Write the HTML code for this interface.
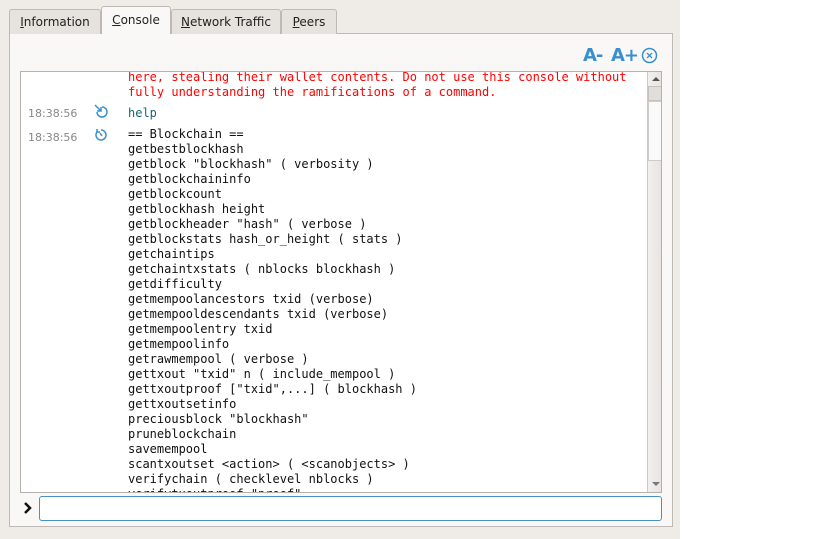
<!DOCTYPE html>
<html><head><style>
*{margin:0;padding:0;box-sizing:border-box}
body{width:830px;height:539px;background:#fff;position:relative;font-family:"DejaVu Sans","Liberation Sans",sans-serif;overflow:hidden}
.win{position:absolute;left:0;top:0;width:680px;height:539px;background:#efebe7}
.tab{position:absolute;top:9px;height:25px;border:1px solid #bdb9b4;border-bottom:none;background:#e6e2dd;border-radius:3px 3px 0 0;font-size:12px;color:#222;text-align:center;line-height:24px}
.tab.act{top:6px;height:28px;background:#f9f8f6;line-height:27px;z-index:2}
.pane{position:absolute;left:9px;top:33px;width:664px;height:494px;border:1px solid #bdb9b4;background:#f9f8f6}
.con{position:absolute;left:20px;top:71px;width:642px;height:422px;border:1px solid #b5b1ac;background:#fff;overflow:hidden}
.mono{font-family:"DejaVu Sans Mono","Liberation Mono",monospace;font-size:12px;line-height:15px;position:absolute;left:107px;white-space:pre}
.ts{position:absolute;left:7px;font-size:11px;color:#888}
.sb{position:absolute;left:626px;top:0;width:15px;height:420px;background:linear-gradient(90deg,#f2f0ee,#e6e3e0);border-left:1px solid #ccc}
.inp{position:absolute;left:39px;top:496px;width:623px;height:25px;border:1px solid #4a8fc6;border-radius:3px;background:#fff}
.ic{position:absolute;top:45px;font:bold 18px 'DejaVu Sans',sans-serif;color:#3a8fcf;letter-spacing:-1px}
u{text-decoration:underline}
</style></head><body>
<div class="win">
<div class="pane"></div>
<div class="tab" style="left:9px;width:92px"><u>I</u>nformation</div>
<div class="tab act" style="left:101px;width:70px"><u>C</u>onsole</div>
<div class="tab" style="left:171px;width:110px"><u>N</u>etwork Traffic</div>
<div class="tab" style="left:281px;width:56px"><u>P</u>eers</div>
<div class="ic" style="left:583px">A-</div>
<div class="ic" style="left:611px">A+</div>
<svg style="position:absolute;left:641px;top:47px" width="17" height="17"><circle cx="8.5" cy="8.5" r="7" fill="none" stroke="#3a8fcf" stroke-width="1.5"/><path d="M6 6L11 11M11 6L6 11" stroke="#3a8fcf" stroke-width="1.3"/></svg>
<div class="con">
<div class="mono" style="top:-2px;color:#f00">here, stealing their wallet contents. Do not use this console without
fully understanding the ramifications of a command.</div>
<div class="ts" style="top:35px">18:38:56</div>
<svg style="position:absolute;left:73px;top:32px" width="14" height="14"><path d="M3 8a5 5 0 1 0 5-5" fill="none" stroke="#3a8fcf" stroke-width="1.5"/><path d="M1 1L7 7M7 3V7H3" fill="none" stroke="#3a8fcf" stroke-width="1.5"/></svg>
<div class="mono" style="top:34px;color:#16676e">help</div>
<div class="ts" style="top:59px">18:38:56</div>
<svg style="position:absolute;left:73px;top:56px" width="14" height="14"><path d="M3 4a5 5 0 1 0 4-2" fill="none" stroke="#3a8fcf" stroke-width="1.5"/><path d="M3 1V4H6M6 5L8 8" fill="none" stroke="#3a8fcf" stroke-width="1.5"/></svg>
<div class="mono" style="top:55px;color:#111">== Blockchain ==
getbestblockhash
getblock "blockhash" ( verbosity )
getblockchaininfo
getblockcount
getblockhash height
getblockheader "hash" ( verbose )
getblockstats hash_or_height ( stats )
getchaintips
getchaintxstats ( nblocks blockhash )
getdifficulty
getmempoolancestors txid (verbose)
getmempooldescendants txid (verbose)
getmempoolentry txid
getmempoolinfo
getrawmempool ( verbose )
gettxout "txid" n ( include_mempool )
gettxoutproof ["txid",...] ( blockhash )
gettxoutsetinfo
preciousblock "blockhash"
pruneblockchain
savemempool
scantxoutset &lt;action&gt; ( &lt;scanobjects&gt; )
verifychain ( checklevel nblocks )
verifytxoutproof "proof"</div>
<div class="sb">
<div style="position:absolute;left:4px;top:5px;border:4px solid transparent;border-bottom:4px solid #555;border-top:none;width:0"></div>
<div style="position:absolute;left:0;top:14px;width:14px;height:15px;background:#e0ddda;border:1px solid #c5c1bd"></div>
<div style="position:absolute;left:0;top:29px;width:14px;height:60px;background:#fafafa;border:1px solid #ccc"></div>
<div style="position:absolute;left:4px;top:410px;border:4px solid transparent;border-top:4px solid #777;border-bottom:none;width:0"></div>
</div>
</div>
<svg style="position:absolute;left:23px;top:502px" width="10" height="12"><path d="M2 1L7 6L2 11" fill="none" stroke="#111" stroke-width="2.5"/></svg>
<div class="inp"></div>
</div>
</body></html>
